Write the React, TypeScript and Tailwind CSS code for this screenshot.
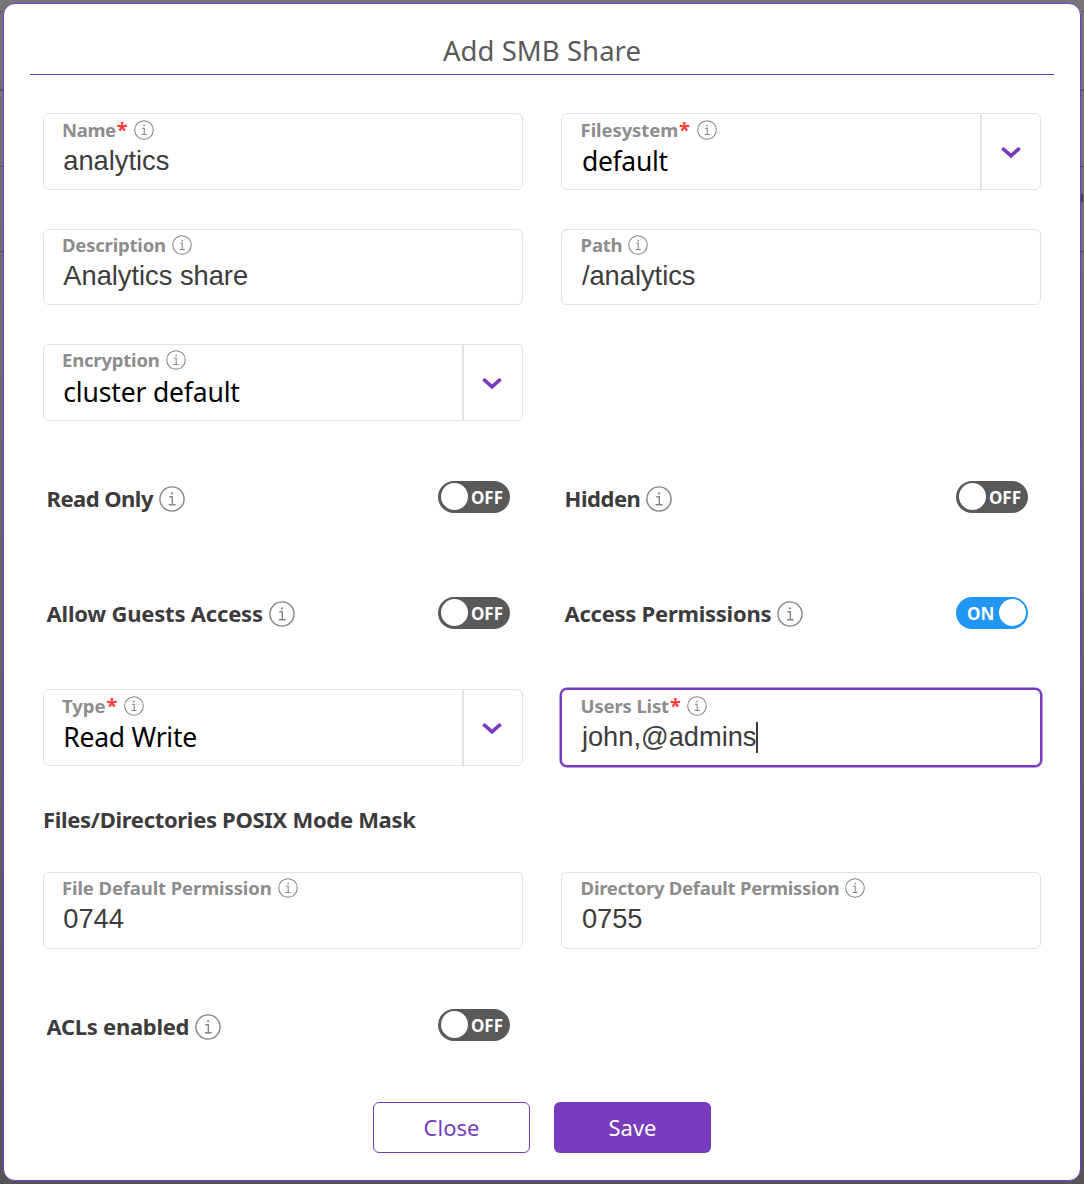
import React from "react";

function InfoIcon({ size, stroke }: { size: number; stroke: number }) {
  return (
    <svg width={size} height={size} viewBox="0 0 26 26" fill="none" stroke="#858585" strokeWidth={stroke} className="shrink-0">
      <circle cx="13" cy="13" r="12.1" />
      <path d="M10.3 10.8h3v8M9.8 18.8h6.8" />
      <circle cx="13.1" cy="7.3" r="1.1" fill="#858585" stroke="none" />
    </svg>
  );
}

function Chevron() {
  return (
    <svg width="20" height="12" viewBox="0 0 20 12" fill="none" stroke="#783bbd" strokeWidth="3.7" strokeLinecap="round" strokeLinejoin="miter">
      <path d="M2.5 2.2 10 8.8 17.5 2.2" />
    </svg>
  );
}

function Asterisk() {
  return <span className="mr-[1.5px] ml-[1px] h-[22px] w-[10px] self-start text-[20px] leading-[26px] text-[#ff3b3b]">*</span>;
}

type FieldProps = {
  label: string;
  value: string;
  labelClass?: string;
  valueClass?: string;
  required?: boolean;
  select?: boolean;
  focused?: boolean;
  short?: boolean;
  right?: boolean;
  raised?: boolean;
};

function Field({ label, value, labelClass = "", valueClass = "", required, select, focused, short, right, raised }: FieldProps) {
  return (
    <div
      className={`flex w-[480px] rounded-md border bg-white ${short ? "h-[76px]" : "h-[77px]"} ${
        focused ? "border-[#783bbd] shadow-[0_0_0_1.5px_#783bbd]" : "border-[#e2e2e2]"
      }`}
    >
      <div className={`flex flex-1 flex-col ${right ? "pl-[18.6px]" : "pl-[18px]"} ${raised ? "pt-[2px]" : "pt-[3px]"}`}>
        <div className="flex h-[26px] items-center whitespace-nowrap text-[18.5px] font-bold text-[#8d8d8d]">
          <span className={labelClass}>{label}</span>
          {required && <Asterisk />}
          <span className="-mt-[1px] ml-[6px] flex">
            <InfoIcon size={20} stroke={1.35} />
          </span>
        </div>
        <div
          className={`flex h-[36px] items-center whitespace-nowrap pl-[1.3px] ${
            select
              ? `text-[26.5px] leading-[34px] text-black ${raised ? "pt-[1px]" : ""}`
              : "font-['Liberation_Sans',sans-serif] text-[27.25px] text-[#3c3c3c]"
          }`}
        >
          <span className={valueClass}>{value}</span>
          {focused && <span className="-ml-px h-[31px] w-[2px] bg-[#3c3c3c]" />}
        </div>
      </div>
      {select && (
        <div className={`flex w-[60px] items-center justify-center border-l-2 border-[#e2e2e2] ${right ? "pt-[3px]" : "pt-[3px] pr-[2px]"}`}>
          <Chevron />
        </div>
      )}
    </div>
  );
}

function ToggleRow({ label, on, labelClass = "", raised }: { label: string; on?: boolean; labelClass?: string; raised?: boolean }) {
  return (
    <div className="flex h-[77px] w-[467px] items-center justify-between pl-[3.5px]">
      <div className="flex items-center gap-[6px] whitespace-nowrap pt-[2px] text-[22px] font-bold text-[#3c3c3c]">
        <span className={labelClass}>{label}</span>
        <InfoIcon size={26} stroke={1.4} />
      </div>
      <div
        className={`flex h-8 w-[72px] items-center justify-between rounded-full text-[17px] font-bold text-white ${
          on ? "flex-row-reverse bg-[#2196f3] pr-[2px] pl-[11px]" : "bg-[#595959] pr-[7px] pl-[2.5px]"
        } ${raised ? "-mt-[2px]" : ""}`}
      >
        <span className="size-[27px] rounded-full bg-white" />
        <span className="pt-[3px]">{on ? "ON" : "OFF"}</span>
      </div>
    </div>
  );
}

function BackdropEdge({ children }: { children?: React.ReactNode }) {
  return (
    <div className="flex w-[3px] flex-col">
      <div className="h-[8px]" />
      <div className="h-px bg-[#5c5c5c]" />
      <div className="h-[77px]" />
      <div className="h-[2px] bg-[#565656]" />
      <div className="h-[75px]" />
      <div className="h-px bg-[#505050]" />
      <div className="h-[27px]">{children}</div>
      <div className="h-[57px]" />
      <div className="h-px bg-[#505050]" />
    </div>
  );
}

export default function App() {
  return (
    <div className="flex h-[1186px] w-[1084px] flex-col bg-white font-['Noto_Sans',sans-serif]">
      <div className="flex h-[1184px] bg-linear-to-b from-[#757575] via-[#666666] to-[#555555] pt-[3px]">
        <BackdropEdge />
        <div className="flex h-[1178px] w-[1078px] flex-col rounded-xl border border-[#783bbd] bg-white pl-[26px]">
          <h1 className="flex h-[71px] w-[1024px] items-center justify-center border-b border-[#783bbd] pt-[24px] text-[27.5px] text-[#5a5a5a]">
            <span className="tracking-[0.05px]">Add SMB Share</span>
          </h1>
          <div className="ml-[13px] mt-[38px] grid grid-cols-[480px_480px] grid-rows-[116px_115px_115px_115px_115px_77px] gap-x-[38px]">
            <Field label="Name" value="analytics" labelClass="tracking-[-0.35px]" required />
            <Field label="Filesystem" value="default" labelClass="tracking-[-0.1px]" valueClass="tracking-[-0.3px]" required select right />
            <Field label="Description" value="Analytics share" labelClass="tracking-[-0.2px]" short raised />
            <Field label="Path" value="/analytics" labelClass="tracking-[-0.2px]" short right raised />
            <Field label="Encryption" value="cluster default" labelClass="tracking-[-0.2px]" valueClass="tracking-[-0.17px]" select raised />
            <div />
            <ToggleRow label="Read Only" labelClass="tracking-[-0.53px]" raised />
            <ToggleRow label="Hidden" labelClass="tracking-[-0.45px]" raised />
            <ToggleRow label="Allow Guests Access" labelClass="tracking-[-0.2px]" />
            <ToggleRow label="Access Permissions" labelClass="tracking-[-0.25px]" on />
            <Field label="Type" value="Read Write" valueClass="tracking-[-0.25px]" required select />
            <Field label="Users List" value="john,@admins" labelClass="tracking-[-0.15px]" required focused right />
          </div>
          <h2 className="ml-[13px] mt-[37px] h-[33px] text-[22px] leading-8 font-bold text-[#3c3c3c]">
            <span className="tracking-[-0.31px]">Files/Directories POSIX Mode Mask</span>
          </h2>
          <div className="ml-[13px] mt-[36px] grid grid-cols-[480px_480px] grid-rows-[115px_115px] gap-x-[38px]">
            <Field label="File Default Permission" value="0744" labelClass="tracking-[-0.12px]" raised />
            <Field label="Directory Default Permission" value="0755" labelClass="tracking-[-0.26px]" right raised />
            <ToggleRow label="ACLs enabled" labelClass="tracking-[-0.28px]" raised />
          </div>
          <div className="flex w-[1024px] justify-center gap-6 text-[22px]">
            <button className="h-[51px] w-[157px] rounded-md border border-[#783bbd] text-[#783bbd]">Close</button>
            <button className="h-[51px] w-[157px] rounded-md bg-[#783bbd] text-white">Save</button>
          </div>
        </div>
        <BackdropEdge>
          <div className="mt-[27px] h-[8px] w-[2px] bg-[#444444]" />
        </BackdropEdge>
      </div>
    </div>
  );
}
